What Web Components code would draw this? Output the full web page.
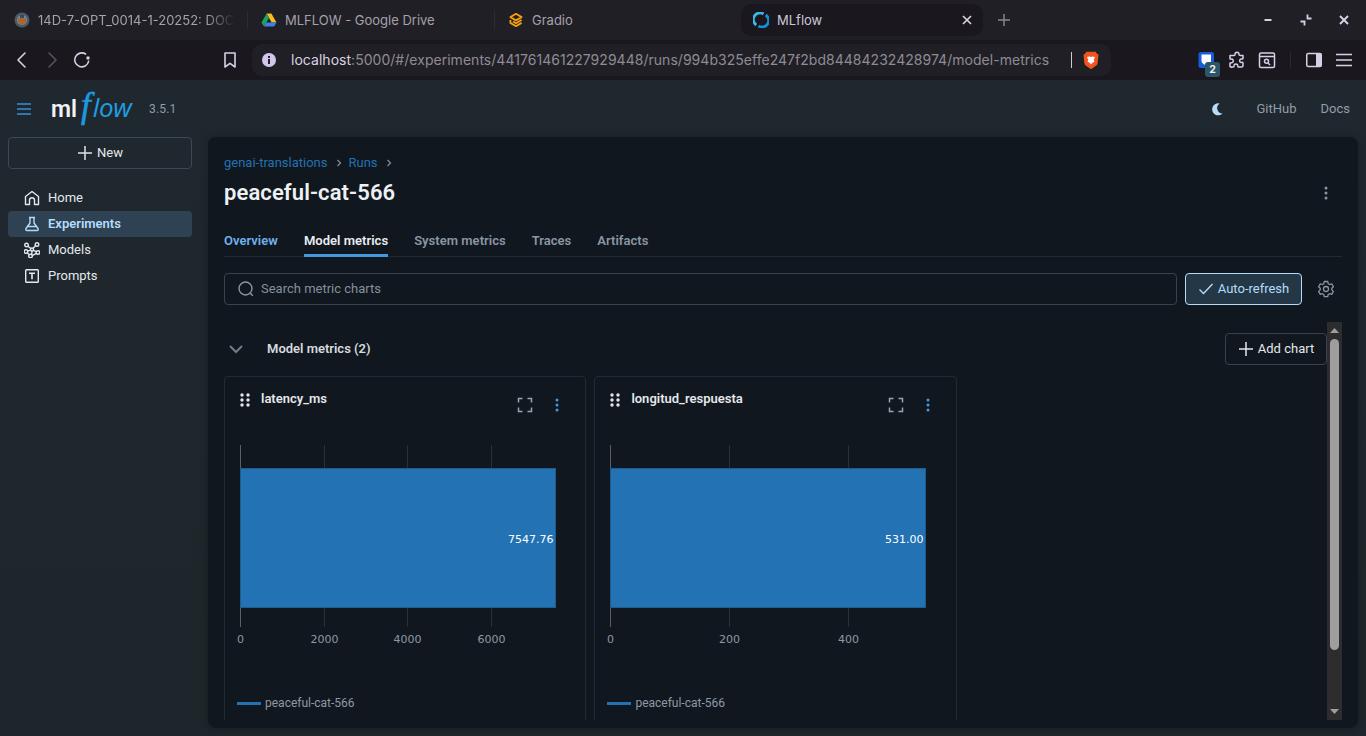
<!DOCTYPE html>
<html lang="en">
<head>
<meta charset="utf-8">
<title>MLflow</title>
<style>
  html,body{margin:0;height:100%;background:#1f272d;overflow:hidden;}
  body{display:flex;flex-direction:column;height:736px;font-family:'Roboto',sans-serif;}
</style>
</head>
<body>
<browser-tabs></browser-tabs>
<browser-toolbar></browser-toolbar>
<mlflow-shell>
  <mlflow-header slot="header"></mlflow-header>
  <mlflow-sidebar slot="sidebar"></mlflow-sidebar>
  <run-view slot="main">
    <metric-chart data-title="latency_ms" data-value="7547.76" data-ticks="[0,2000,4000,6000]"></metric-chart>
    <metric-chart data-title="longitud_respuesta" data-value="531.00" data-ticks="[0,200,400]"></metric-chart>
  </run-view>
</mlflow-shell>

<script>
// browser tab strip
const browserTabsTemplate = document.createElement('template');
browserTabsTemplate.innerHTML = `
<style>
  :host{display:flex;flex:none;height:40px;background:#211f26;color:#a5a1ab;font:13px/1 'Inter',sans-serif;box-sizing:border-box;padding-top:4px;padding-bottom:4px;}
  .tab{display:flex;align-items:center;flex:none;width:247px;height:32px;box-sizing:border-box;padding-left:14px;gap:8px;position:relative;}
  .tab:first-child{padding-left:15px;}
  .tab + .tab::before{content:'';position:absolute;left:0;top:7px;bottom:7px;width:1px;background:#2e2c33;}
  .tab svg{flex:none;width:16px;height:16px;}
  .label{white-space:nowrap;}
  .fade{-webkit-mask-image:linear-gradient(90deg,#000 86%,transparent);mask-image:linear-gradient(90deg,#000 86%,transparent);}
  .tab.active{width:242px;background:#1a181e;border-radius:10px;color:#cdc7d6;padding-left:12px;}
  .tab.active::before{display:none;}
  .tab svg.x{position:absolute;right:11px;top:11px;width:10px;height:10px;}
  .plus{flex:none;width:14px;height:14px;margin:9px 0 0 14px;}
  .win{margin-left:auto;display:flex;align-items:center;height:32px;padding-right:14px;gap:22px;}
  .win svg{display:block;width:16px;height:16px;}
</style>
<div class="tab">
  <svg viewBox="0 0 16 16"><circle cx="8" cy="8" r="7.5" fill="#4c5a68"/><circle cx="8" cy="8" r="5" fill="#7d8c93"/><path d="M4 6h8v3c0 2-2 3-4 4-2-1-4-2-4-4z" fill="#a9652f"/><path d="M6 3h4v3H6z" fill="#2e4a70"/></svg>
  <span class="label fade">14D-7-OPT_0014-1-20252: DOC</span>
</div>
<div class="tab">
  <svg viewBox="0 0 16 16"><path d="M5.6 1.5h4.8L15.5 10.5h-4.9z" fill="#f6bd1c"/><path d="M5.6 1.5L.5 10.5 3 14.6 8 6z" fill="#1da261"/><path d="M3 14.6h10.1l2.4-4.1H5.4z" fill="#3f7fec"/></svg>
  <span class="label">MLFLOW - Google Drive</span>
</div>
<div class="tab">
  <svg viewBox="0 0 16 16" fill="none" stroke="#f59e0b" stroke-width="1.8" stroke-linejoin="round"><path d="M8 1.800l5.600 3.300L8 8.400 2.400 5.100z"/><path d="M13.600 8L8 11.300 5 9.500"/><path d="M13.600 10.900L8 14.200 2.400 10.900V8"/></svg>
  <span class="label">Gradio</span>
</div>
<div class="tab active">
  <svg viewBox="0 0 16 16" fill="none" stroke-width="2.800"><path d="M3.300 13A6.500 6.500 0 0 1 10.500 2" stroke="#3bb8ea"/><path d="M12.700 3A6.500 6.500 0 0 1 5.500 14" stroke="#1590d8"/></svg>
  <span class="label">MLflow</span>
  <svg class="x" viewBox="0 0 10 10" stroke="#d8d2e0" stroke-width="1.700"><path d="M1 1l8 8M9 1L1 9"/></svg>
</div>
<svg class="plus" viewBox="0 0 14 14" stroke="#8d8794" stroke-width="1.400"><path d="M7 1v12M1 7h12"/></svg>
<div class="win">
  <svg viewBox="0 0 16 16" stroke="#d8cfe6" stroke-width="2"><path d="M4.500 8h7"/></svg>
  <svg viewBox="0 0 16 16" fill="none" stroke="#d8cfe6" stroke-width="1.800"><path d="M9.500 2.500v4h4M2.500 9.500h4v4"/></svg>
  <svg viewBox="0 0 16 16" stroke="#d8cfe6" stroke-width="2"><path d="M4 4l8 8M12 4l-8 8"/></svg>
</div>
`;
class BrowserTabs extends HTMLElement {
  constructor(){
    super();
    this.attachShadow({mode:'open'}).append(browserTabsTemplate.content.cloneNode(true));
  }
}
customElements.define('browser-tabs', BrowserTabs);

// address bar row
const browserToolbarTemplate = document.createElement('template');
browserToolbarTemplate.innerHTML = `
<style>
  :host{display:flex;flex:none;align-items:center;height:40px;background:#1a181e;padding:0 7px;box-sizing:border-box;}
  .btn{flex:none;width:30px;height:30px;display:flex;align-items:center;justify-content:center;position:relative;}
  .btn svg{width:20px;height:20px;display:block;}
  .spacer{flex:none;width:118px;}
  .url{flex:none;width:859px;height:32px;margin-left:7px;background:#211f26;border-radius:10px;display:flex;align-items:center;box-sizing:border-box;padding:0 12px 0 9px;color:#8f8b95;font:14px/1 'Inter',sans-serif;letter-spacing:.03px;white-space:nowrap;}
  .url svg.info{width:16px;height:16px;flex:none;margin-right:14px;}
  .url b{font-weight:400;color:#d9d3e0;}
  .url .addr{flex:1;}
  .url i{flex:none;width:1px;height:16px;background:#cfc8d6;margin-right:11px;}
  .url svg.brave{width:16px;height:19px;flex:none;}
  .right{margin-left:auto;display:flex;align-items:center;}
  .sep{flex:none;width:1px;height:16px;background:#2c2a31;margin:0 8px 0 8px;}
  .badge{position:absolute;left:13px;top:17px;width:15px;height:15px;border-radius:3px;background:#2b5568;color:#f2f2f2;font:700 10.5px/15px 'Inter',sans-serif;text-align:center;}
</style>
<div class="btn"><svg viewBox="0 0 20 20" fill="none" stroke="#d8cfe6" stroke-width="1.6" stroke-linecap="round" stroke-linejoin="round"><path d="M13 3l-7 7 7 7"/></svg></div>
<div class="btn"><svg viewBox="0 0 20 20" fill="none" stroke="#55525b" stroke-width="1.6" stroke-linecap="round" stroke-linejoin="round"><path d="M7 3l7 7-7 7"/></svg></div>
<div class="btn"><svg viewBox="0 0 20 20" fill="none" stroke="#d8cfe6" stroke-width="1.6" stroke-linecap="round"><path d="M16.600 11.400A7 7 0 1 1 13.600 4"/><circle cx="16" cy="8" r="1.700" fill="#d8cfe6" stroke="none"/></svg></div>
<div class="spacer"></div>
<div class="btn"><svg viewBox="0 0 20 20" fill="none" stroke="#d8cfe6" stroke-width="1.6" stroke-linejoin="round"><path d="M5 3h10v14l-5-3.600L5 17z"/></svg></div>
<div class="url">
  <svg class="info" viewBox="0 0 16 16"><circle cx="8" cy="8" r="7" fill="#d3c6ec"/><path d="M7 7h2v5H7zM7 4h2v2H7z" fill="#211f26"/></svg>
  <span class="addr"><b>localhost</b>:5000/#/experiments/441761461227929448/runs/994b325effe247f2bd84484232428974/model-metrics</span>
  <i></i>
  <svg class="brave" viewBox="0 0 16 19"><path d="M3.500.8h9l1.500 2 1.500.6-.8 8.400c-.2 1.400-.7 2.200-1.800 3L8 18.200l-4.900-3.400c-1.100-.8-1.600-1.600-1.800-3L.5 3.400 2 2.800z" fill="#f0541e"/><path d="M4 6l2.600-.6L8 6l1.400-.6L12 6l-1.300 3 .8 1.600-2 1.200L8 13.600l-1.500-1.800-2-1.200.8-1.600z" fill="#fff"/></svg>
</div>
<div class="right">
  <div class="btn"><svg viewBox="0 0 20 20"><rect x="1.500" y="2" width="15.500" height="16" rx="2.500" fill="#175ddc"/><path d="M4.500 4.500h9.500v6.500c0 2-2.700 3.600-4.700 4.600C7.200 14.600 4.500 13 4.500 11z" fill="#fff"/></svg><span class="badge">2</span></div>
  <div class="btn"><svg viewBox="0 0 20 20" fill="none" stroke="#d8cfe6" stroke-width="1.5" stroke-linejoin="round"><path d="M8 4.500c0-3 4-3 4 0 0 .8.5 1 1.200 1H16v3c-.2.600-.8.600-1.400.500-2.600-.4-2.600 3.800 0 3.400.6-.1 1.200-.1 1.400.5v2.600c0 .8-.6 1.500-1.500 1.500h-3c-.8 0-.8-.7-.8-1.300.3-2.400-3.900-2.400-3.600 0 0 .6 0 1.300-.8 1.300H4.500C3.700 17.500 3 16.800 3 16v-2.800c.2-.7.800-.6 1.400-.5 2.400.3 2.400-3.900 0-3.600-.6.100-1.400.1-1.400-.7V5.500h4c.6 0 1-.3 1-1z"/></svg></div>
  <div class="btn"><svg viewBox="0 0 20 20" fill="none" stroke="#d8cfe6" stroke-width="1.5"><rect x="2.500" y="3" width="15" height="14.500" rx="1.500"/><path d="M2.500 6.500h15"/><circle cx="9.500" cy="11.300" r="2"/><path d="M11 13l2 2"/></svg></div>
  <div class="sep"></div>
  <div class="btn"><svg viewBox="0 0 20 20"><rect x="2.750" y="3.500" width="14.500" height="13" rx="1.500" fill="none" stroke="#d8cfe6" stroke-width="1.500"/><rect x="12" y="3.500" width="5.500" height="13" fill="#d8cfe6"/></svg></div>
  <div class="btn"><svg viewBox="0 0 20 20" stroke="#d8cfe6" stroke-width="1.600"><path d="M2 4.500h16M2 10h16M2 15.500h16"/></svg></div>
</div>
`;
class BrowserToolbar extends HTMLElement {
  constructor(){
    super();
    this.attachShadow({mode:'open'}).append(browserToolbarTemplate.content.cloneNode(true));
  }
}
customElements.define('browser-toolbar', BrowserToolbar);

// app frame: header on top, sidebar + main below
const mlflowShellTemplate = document.createElement('template');
mlflowShellTemplate.innerHTML = `
<style>
  :host{display:grid;flex:1;min-height:0;grid-template-columns:200px 1fr;grid-template-rows:57px 1fr;background:linear-gradient(180deg,#20282f,#1e262b);}
  ::slotted([slot=header]){grid-column:1 / 3;}
</style>
<slot name="header"></slot>
<slot name="sidebar"></slot>
<slot name="main"></slot>
`;
class MlflowShell extends HTMLElement {
  constructor(){
    super();
    this.attachShadow({mode:'open'}).append(mlflowShellTemplate.content.cloneNode(true));
  }
}
customElements.define('mlflow-shell', MlflowShell);

const mlflowHeaderTemplate = document.createElement('template');
mlflowHeaderTemplate.innerHTML = `
<style>
  :host{display:flex;align-items:center;height:57px;padding:0 16px 0 16px;box-sizing:border-box;font-size:13px;color:#929da8;}
  .burger{width:16px;height:16px;display:block;margin-right:19px;}
  .logo{display:flex;align-items:baseline;width:82px;margin-top:-6px;line-height:1;margin-right:16px;white-space:nowrap;}
  .ml{font-size:23px;font-weight:600;color:#f1f3f5;}
  .f{font-family:'Liberation Serif',serif;font-size:35px;font-style:italic;color:#1a9be0;margin-left:4px;-webkit-text-stroke:.6px #1a9be0;}
  .low{font-family:'Open Sans',sans-serif;font-size:26px;font-style:italic;font-weight:500;color:#1f9fe3;letter-spacing:-.3px;margin-left:2px;}
  .ver{font-size:12px;letter-spacing:.2px;}
  .moon{width:16px;height:16px;margin-left:auto;margin-right:32px;display:block;}
  .link + .link{margin-left:24px;}
</style>
<svg class="burger" viewBox="0 0 16 16" stroke="#3a8fd4" stroke-width="1.500"><path d="M1 3h14M1 8h14M1 13h14"/></svg>
<div class="logo"><span class="ml">ml</span><span class="f">f</span><span class="low">low</span></div>
<span class="ver">3.5.1</span>
<svg class="moon" viewBox="0 0 16 16"><path d="M10.500 2.500A6 6 0 1 0 13.500 12.500 5.500 5.500 0 0 1 10.500 2.500z" fill="#b6dcf7"/></svg>
<span class="link">GitHub</span>
<span class="link">Docs</span>
`;
class MlflowHeader extends HTMLElement {
  constructor(){
    super();
    this.attachShadow({mode:'open'}).append(mlflowHeaderTemplate.content.cloneNode(true));
  }
}
customElements.define('mlflow-header', MlflowHeader);

const mlflowSidebarTemplate = document.createElement('template');
mlflowSidebarTemplate.innerHTML = `
<style>
  :host{display:flex;flex-direction:column;padding:0 8px;box-sizing:border-box;font-size:13px;line-height:20px;color:#e4e8ec;}
  .new{display:flex;align-items:center;justify-content:center;gap:4px;height:32px;border:1px solid #3d4853;border-radius:4px;box-sizing:border-box;}
  .new svg{width:16px;height:16px;}
  nav{display:flex;flex-direction:column;margin-top:16px;}
  a{display:flex;align-items:center;gap:8px;height:26px;padding-left:16px;border-radius:4px;}
  a svg{width:16px;height:16px;flex:none;}
  a.on{background:#2f4254;color:#b4dcfa;font-weight:600;}
</style>
<div class="new"><svg viewBox="0 0 16 16" stroke="#dfe3e7" stroke-width="1.500"><path d="M8 1v14M1 8h14"/></svg>New</div>
<nav>
  <a><svg viewBox="0 0 16 16" fill="none" stroke="#e4e8ec" stroke-width="1.400" stroke-linejoin="round"><path d="M1.500 6.500L8 1.500l6.500 5v8h-4V10c0-3-5-3-5 0v4.500h-4z"/></svg>Home</a>
  <a class="on"><svg viewBox="0 0 16 16" fill="none" stroke="#b4dcfa" stroke-width="1.400" stroke-linejoin="round"><path d="M5 1.500h6M6 1.500V7L2 12.500c-.6 1 0 2 1 2h10c1 0 1.600-1 1-2L10 7V1.500M4 10.500h8"/></svg>Experiments</a>
  <a><svg viewBox="0 0 16 16" fill="none" stroke="#e4e8ec" stroke-width="1.400"><circle cx="2.500" cy="3" r="1.800"/><circle cx="13" cy="2.500" r="1.800"/><circle cx="14" cy="10.500" r="1.800"/><circle cx="2" cy="9.500" r="1.800"/><circle cx="6.500" cy="14" r="1.800"/><circle cx="8" cy="7.500" r="1.500"/><path d="M4 4.200l2.800 2.300M11.700 3.600L9 6.500M9.400 8.300l3 1.400M3.700 9.200l2.900-1M3.200 11l2.200 1.700M7.700 12.500l.3-3.500M12.300 11.300L8.200 13.600"/></svg>Models</a>
  <a><svg viewBox="0 0 16 16" fill="none" stroke="#e4e8ec" stroke-width="1.400"><rect x="1.700" y="1.700" width="12.600" height="12.600" rx=".8"/><path d="M5 5.200h6M8 5.200v6" stroke-width="1.600"/></svg>Prompts</a>
</nav>
`;
class MlflowSidebar extends HTMLElement {
  constructor(){
    super();
    this.attachShadow({mode:'open'}).append(mlflowSidebarTemplate.content.cloneNode(true));
  }
}
customElements.define('mlflow-sidebar', MlflowSidebar);

// the run page, charts come in through the slot
const runViewTemplate = document.createElement('template');
runViewTemplate.innerHTML = `
<style>
  :host{display:flex;flex-direction:column;min-height:0;margin:0 8px 8px 8px;padding:16px 16px 8px 16px;box-sizing:border-box;background:#11171e;border-radius:8px;font-size:13px;line-height:20px;color:#e4e8ec;box-shadow:0 0 8px rgba(0,0,0,.25);overflow:hidden;}
  .crumbs{display:flex;align-items:center;height:20px;color:#2272b4;}
  .crumbs svg{width:16px;height:16px;margin:0 2px 0 3px;}
  .title{display:flex;align-items:center;justify-content:space-between;height:32px;margin-top:4px;}
  h1{margin:0;font-size:22px;font-weight:600;color:#eef1f4;line-height:28px;letter-spacing:.1px;}
  .kebab{width:16px;height:16px;flex:none;}
  .tabs{display:flex;gap:26px;height:37px;margin-top:11px;box-sizing:border-box;border-bottom:1px solid #222a33;font-weight:600;color:#8996a4;letter-spacing:.03px;}
  .tabs span{box-sizing:border-box;height:37px;padding-top:11px;line-height:20px;}
  .tabs .first{color:#6fb2ec;}
  .tabs .cur{color:#e9edf1;border-bottom:3px solid #4299e0;}
  .filters{display:flex;align-items:center;margin-top:16px;}
  .search{flex:1;display:flex;align-items:center;gap:6px;height:32px;border:1px solid #37424d;border-radius:4px;box-sizing:border-box;padding-left:12px;color:#84909c;}
  .search svg{width:18px;height:18px;flex:none;}
  .auto{display:flex;align-items:center;justify-content:center;gap:4px;flex:none;width:117px;height:32px;margin-left:8px;box-sizing:border-box;border:1px solid #b4dcfa;border-radius:4px;background:#243746;color:#b4dcfa;}
  .auto svg{width:16px;height:16px;}
  .gear{flex:none;width:18px;height:18px;margin:0 7px 0 15px;}
  .scroll{display:flex;flex:none;height:398px;margin-top:17px;}
  .content{flex:1;min-width:0;overflow:hidden;}
  .section{display:flex;align-items:center;height:32px;margin-top:11px;}
  .section .chev{width:16px;height:16px;margin-left:4px;flex:none;}
  .section strong{font-weight:600;color:#d6dadf;margin-left:23px;}
  .add{display:flex;align-items:center;justify-content:center;gap:4px;margin-left:auto;width:102px;height:32px;border:1px solid #37424d;border-radius:4px;box-sizing:border-box;color:#e4e8ec;}
  .add svg{width:16px;height:16px;}
  .grid{display:flex;gap:8px;margin-top:11px;align-items:flex-start;}
  .bar{flex:none;width:15px;display:flex;flex-direction:column;background:#2d2d2d;}
  .bar .arrow{flex:none;height:17px;display:flex;align-items:center;justify-content:center;}
  .bar .arrow svg{width:9px;height:5px;}
  .bar .track{flex:1;display:flex;flex-direction:column;padding:0 3px;}
  .bar .thumb{height:311px;background:#9e9e9e;border-radius:5px;}
</style>
<div class="crumbs">genai-translations<svg viewBox="0 0 16 16" fill="none" stroke="#7f8b97" stroke-width="1.300"><path d="M6.500 5l3 3-3 3"/></svg>Runs<svg viewBox="0 0 16 16" fill="none" stroke="#7f8b97" stroke-width="1.300"><path d="M6.500 5l3 3-3 3"/></svg></div>
<div class="title">
  <h1>peaceful-cat-566</h1>
  <svg class="kebab" viewBox="0 0 16 16" fill="#8996a4" style="margin-right:8px"><circle cx="8" cy="3" r="1.500"/><circle cx="8" cy="8" r="1.500"/><circle cx="8" cy="13" r="1.500"/></svg>
</div>
<div class="tabs"><span class="first">Overview</span><span class="cur">Model metrics</span><span>System metrics</span><span>Traces</span><span>Artifacts</span></div>
<div class="filters">
  <div class="search"><svg viewBox="0 0 18 18" fill="none" stroke="#8996a4" stroke-width="1.400"><circle cx="8.500" cy="8.500" r="6.500"/><path d="M13.300 13.300l2.500 2.500"/></svg>Search metric charts</div>
  <div class="auto"><svg viewBox="0 0 16 16" fill="none" stroke="#b4dcfa" stroke-width="1.400"><path d="M1.500 8.500l4 4 9-9.500"/></svg>Auto-refresh</div>
  <svg class="gear" viewBox="0 0 18 18" fill="none" stroke="#8996a4" stroke-width="1.300" stroke-linejoin="round"><path d="M7.300 1.500h3.400l.5 2.200 1.400.8 2.100-.7 1.700 3-1.600 1.500v1.600l1.600 1.500-1.700 3-2.100-.7-1.400.8-.5 2.200H7.300l-.5-2.200-1.400-.8-2.100.7-1.700-3 1.600-1.500V8.300L1.600 6.800l1.700-3 2.100.7 1.400-.8z"/><circle cx="9" cy="9" r="2.500"/></svg>
</div>
<div class="scroll">
  <div class="content">
    <div class="section">
      <svg class="chev" viewBox="0 0 16 16" fill="none" stroke="#6f7d8a" stroke-width="2"><path d="M2 5l6 6 6-6"/></svg>
      <strong>Model metrics (2)</strong>
      <div class="add"><svg viewBox="0 0 16 16" stroke="#e4e8ec" stroke-width="1.500"><path d="M8 1v14M1 8h14"/></svg>Add chart</div>
    </div>
    <div class="grid"><slot></slot></div>
  </div>
  <div class="bar">
    <div class="arrow"><svg viewBox="0 0 9 5"><path d="M4.500 0L9 5H0z" fill="#9e9e9e"/></svg></div>
    <div class="track"><div class="thumb"></div></div>
    <div class="arrow"><svg viewBox="0 0 9 5"><path d="M0 0h9L4.500 5z" fill="#9e9e9e"/></svg></div>
  </div>
</div>
`;
class RunView extends HTMLElement {
  constructor(){
    super();
    this.attachShadow({mode:'open'}).append(runViewTemplate.content.cloneNode(true));
  }
}
customElements.define('run-view', RunView);

// one bar chart card
const metricChartTemplate = document.createElement('template');
metricChartTemplate.innerHTML = `
<style>
  :host{display:block;flex:none;width:362.4px;height:400px;box-sizing:border-box;border:1px solid #222a33;border-radius:4px;font-size:13px;line-height:20px;}
  .head{display:flex;align-items:flex-start;height:58px;box-sizing:border-box;padding:12px 20px 0 15px;}
  .drag{width:10px;height:14px;flex:none;margin-top:4px;}
  .name{font-weight:600;color:#e4e8ec;margin-left:11px;flex:1;}
  .full{width:16px;height:16px;flex:none;margin-top:8px;}
  .more{width:16px;height:16px;flex:none;margin:8px 0 0 16px;}
  svg.plot{display:block;width:360px;height:215px;}
  svg.plot text{font-family:'DejaVu Sans',sans-serif;font-size:11px;}
  .legend{display:flex;align-items:center;gap:4px;margin:45px 0 0 12px;color:#8e99a4;font-size:12px;height:16px;}
  .legend i{width:24px;height:3px;background:#2272b4;}
</style>
<div class="head">
  <svg class="drag" viewBox="0 0 10 14" fill="#e4e8ec"><circle cx="2" cy="2" r="1.700"/><circle cx="8" cy="2" r="1.700"/><circle cx="2" cy="7" r="1.700"/><circle cx="8" cy="7" r="1.700"/><circle cx="2" cy="12" r="1.700"/><circle cx="8" cy="12" r="1.700"/></svg>
  <span class="name" id="chart-title"></span>
  <svg class="full" viewBox="0 0 16 16" fill="none" stroke="#98a4af" stroke-width="1.500"><path d="M1.500 5.500v-4h4M10.500 1.500h4v4M14.500 10.500v4h-4M5.500 14.500h-4v-4"/></svg>
  <svg class="more" viewBox="0 0 16 16" fill="#4299e0"><circle cx="8" cy="3" r="1.500"/><circle cx="8" cy="8" r="1.500"/><circle cx="8" cy="13" r="1.500"/></svg>
</div>
<svg class="plot" id="plot" viewBox="0 0 360 215"></svg>
<div class="legend"><i></i><span id="legend-name">peaceful-cat-566</span></div>
`;
class MetricChart extends HTMLElement {
  constructor(){
    super();
    this.attachShadow({mode:'open'}).append(metricChartTemplate.content.cloneNode(true));
  }

  connectedCallback(){
    this.shadowRoot.getElementById('chart-title').textContent = this.getAttribute('data-title');
    const ticks = JSON.parse(this.getAttribute('data-ticks'));
    this.drawPlot(ticks, this.getAttribute('data-value'));
  }

  drawPlot(ticks, valueText){
    const plot = this.shadowRoot.getElementById('plot');
    const NS = 'http://www.w3.org/2000/svg';
    const x0 = 15.5;
    const barWidth = 316;
    const value = parseFloat(valueText);
    const add = (tag, attrs, text) => {
      const el = document.createElementNS(NS, tag);
      for(const k in attrs){ el.setAttribute(k, attrs[k]); }
      if(text !== undefined){ el.textContent = text; }
      plot.appendChild(el);
    };

    // gridlines and tick labels
    ticks.forEach(t => {
      const x = Math.round(x0 - .5 + t / value * barWidth) + .5;
      add('line', {x1:x, x2:x, y1:10, y2:192, stroke: t === 0 ? '#5a5f65' : '#2a3038'});
      add('text', {x:x, y:208, fill:'#8e99a4', 'text-anchor':'middle'}, t);
    });
    add('rect', {x:x0, y:33.5, width:barWidth - 1, height:139, fill:'#2272b4', stroke:'#1d5c8f'});
    add('text', {x:x0 + barWidth - 3, y:108, fill:'#ffffff', 'text-anchor':'end'}, valueText);
  }
}
customElements.define('metric-chart', MetricChart);
</script>
</body>
</html>
